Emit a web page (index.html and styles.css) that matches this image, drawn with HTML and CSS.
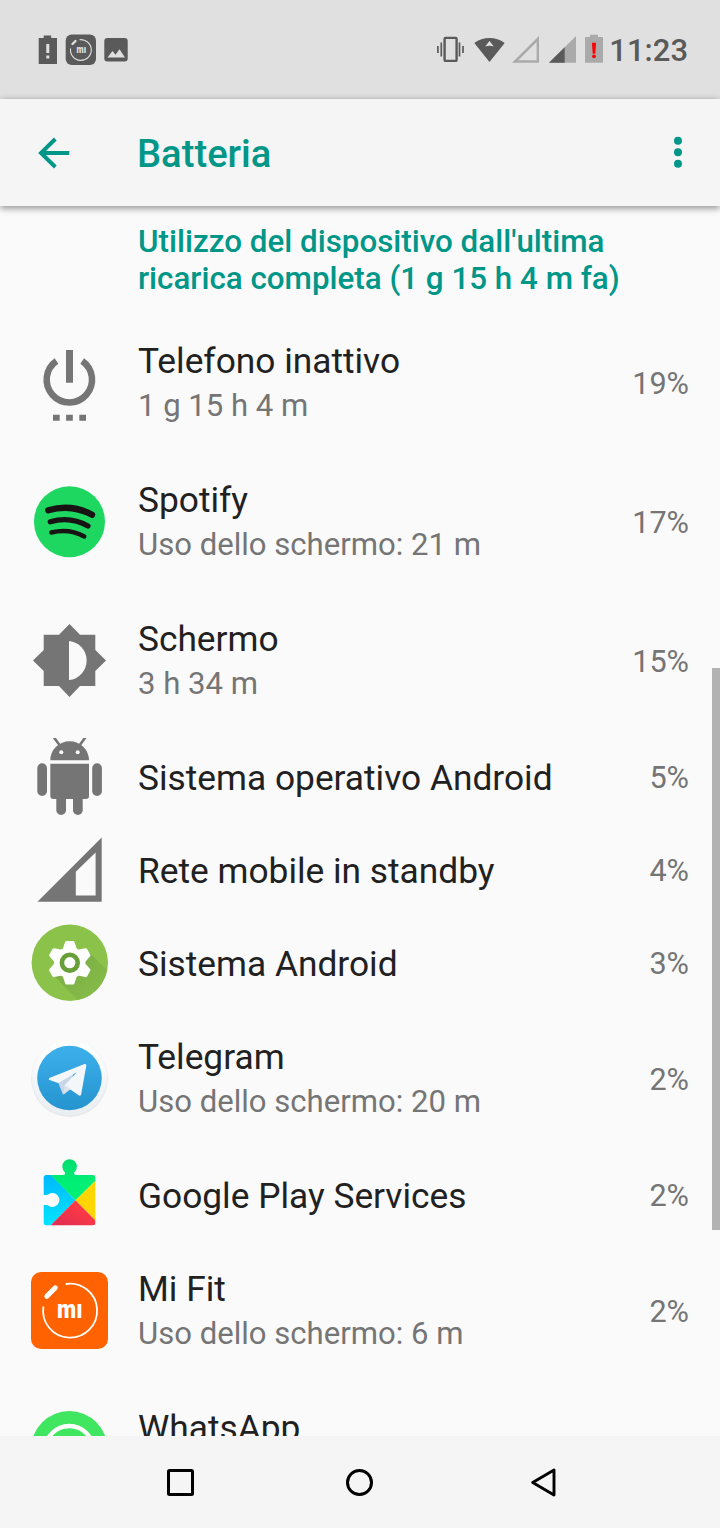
FILE: index.html
```
<!DOCTYPE html>
<html lang="it">
<head>
    <meta charset="UTF-8">
    <meta name="viewport" content="width=device-width, initial-scale=1.0">
    <title>Batteria</title>
    <link rel="stylesheet" href="styles.css">
</head>
<body>

<div class="status-bar">
    <div class="notifications">
        <svg width="20" height="32" viewBox="0 0 20 32">
            <path fill="#5a5a5a" d="M0.700 4h5V1.500h7.500V4H19v26H0.700z"/>
            <path fill="#e0e0e0" d="M8.300 10h3v9h-3zM8.300 21.500h3v3h-3z"/>
        </svg>
        <svg width="32" height="32" viewBox="0 0 32 32">
            <rect x="0.700" y="0.500" width="30.300" height="30.500" rx="6" fill="#5a5a5a"/>
            <path d="M14.500 5.700A10.400 10.400 0 1 1 5.600 14.500" fill="none" stroke="#e0e0e0" stroke-width="1.100"/>
            <path d="M7.500 10l3-3" stroke="#e0e0e0" stroke-width="2.400" stroke-linecap="round"/>
            <text class="mi" x="11.500" y="18.700" font-size="11" textLength="9.500" lengthAdjust="spacingAndGlyphs" fill="#e0e0e0">mı</text>
        </svg>
        <svg width="24" height="32" viewBox="0 0 24 32">
            <rect x="0.300" y="4" width="23.400" height="23.600" rx="3" fill="#5a5a5a"/>
            <path fill="#e0e0e0" d="M3.500 23.500l5-6.500 3 3.700 4-5.500 5.500 8.300z"/>
        </svg>
    </div>
    <div class="indicators">
        <svg width="29" height="32" viewBox="0 0 29 32">
            <rect x="8.600" y="3.900" width="12" height="23" rx="1" fill="none" stroke="#5a5a5a" stroke-width="2.400"/>
            <path d="M5.300 8.500v14M1.900 12v7M23.500 8.500v14M27 12v7" stroke="#5a5a5a" stroke-width="1.700"/>
        </svg>
        <svg class="wifi" width="31" height="32" viewBox="0 0 31 32">
            <path fill="#5a5a5a" d="M0.300 9C9 2.300 22 2.300 30.700 9L15.500 28z"/>
            <path fill="#e0e0e0" d="M15.500 7l4.300 5.600c-2.300-1.300-6.300-1.300-8.600 0z"/>
        </svg>
        <svg class="sim" width="27" height="32" viewBox="0 0 27 32">
            <path fill="#aaa" fill-rule="evenodd" d="M0 28.700L27 2v26.700zM6.300 26.300h18.300V8z"/>
        </svg>
        <svg class="sim-data" width="27" height="32" viewBox="0 0 27 32">
            <path fill="#aaa" d="M0 28.700L27 2v26.700z"/>
            <path fill="#5a5a5a" d="M0 28.700L15.700 13.200v15.500z"/>
        </svg>
        <svg width="20" height="32" viewBox="0 0 20 32">
            <path fill="#aaa" d="M1 3h5V0.700h8V3h5v25.700H1z"/>
            <path fill="#f00" d="M8 8.700h4l-0.700 11H8.700z"/>
            <circle cx="10" cy="22.300" r="1.900" fill="#f00"/>
        </svg>
        <span class="clock">11:23</span>
    </div>
</div>

<div class="app-bar">
    <svg class="back" width="32" height="32" viewBox="0 0 32 32">
        <path d="M31.300 16H4M17.300 2L3 16l14.300 14" fill="none" stroke="#009688" stroke-width="3.900"/>
    </svg>
    <h1>Batteria</h1>
    <svg class="menu" width="10" height="34" viewBox="0 0 10 34" fill="#009688">
        <circle cx="5" cy="4.800" r="4"/>
        <circle cx="5" cy="16.300" r="4"/>
        <circle cx="5" cy="27.800" r="4"/>
    </svg>
</div>

<div class="content">
    <h2>Utilizzo del dispositivo dall'ultima<br>ricarica completa (1 g 15 h 4 m fa)</h2>

    <!-- Telefono inattivo -->
    <div class="row double">
        <svg class="icon" viewBox="0 -1 77 77">
            <path fill="#757575" d="M35 5h7v32.700h-7zM22 69.700h6.700v6H22zM35.100 69.700h6.700v6h-6.700zM48.300 69.700H55v6h-6.700z"/>
            <path d="M25.500 16A22.700 22.700 0 1 0 51.200 16" fill="none" stroke="#757575" stroke-width="6.500"/>
        </svg>
        <div class="text">
            <div class="name">Telefono inattivo</div>
            <div class="summary">1 g 15 h 4 m</div>
        </div>
        <div class="percent">19%</div>
    </div>

    <!-- Spotify -->
    <div class="row double">
        <svg class="icon" viewBox="0 -1 77 77">
            <circle cx="38.500" cy="37.700" r="35.500" fill="#1ed760"/>
            <g fill="none" stroke="#191414" stroke-linecap="round">
                <path d="M17.300 26.300Q40 19.500 61 30.700" stroke-width="6.400"/>
                <path d="M19.300 37.700Q39.500 32 57 42" stroke-width="5.300"/>
                <path d="M20.300 48.500Q38 44 53.300 52.500" stroke-width="4.400"/>
            </g>
        </svg>
        <div class="text">
            <div class="name">Spotify</div>
            <div class="summary">Uso dello schermo: 21 m</div>
        </div>
        <div class="percent">17%</div>
    </div>

    <!-- Schermo -->
    <div class="row double">
        <svg class="icon" viewBox="0 -1 77 77">
            <path fill="#757575" d="M12.700 11.700H28L38.500 1 49 11.700h15.300V27L75 37.500 64.300 48v15H49L38.500 74 28 63H12.700V48L2 37.500 12.700 27z"/>
            <path fill="#fafafa" d="M38 18a19.600 19.600 0 0 1 0 39z"/>
        </svg>
        <div class="text">
            <div class="name">Schermo</div>
            <div class="summary">3 h 34 m</div>
        </div>
        <div class="percent">15%</div>
    </div>

    <!-- Sistema operativo Android -->
    <div class="row">
        <svg class="icon" viewBox="0 -1 77 77">
            <g fill="#757575">
                <path d="M19.300 21.200a19.350 19 0 0 1 38.700 0z"/>
                <path d="M19.300 24.700H58V57a3 3 0 0 1-3 3H22.300a3 3 0 0 1-3-3z"/>
                <rect x="6.300" y="24.300" width="9.700" height="32.700" rx="4.850"/>
                <rect x="61.200" y="24.300" width="9.700" height="32.700" rx="4.850"/>
                <rect x="25.300" y="50" width="9.700" height="26" rx="4.850"/>
                <rect x="42" y="50" width="9.700" height="26" rx="4.850"/>
            </g>
            <path d="M23 -1.500l5.500 7.500M54.300 -1.500L48.800 6" stroke="#757575" stroke-width="2.600"/>
            <circle cx="30.300" cy="13.300" r="2" fill="#fafafa"/>
            <circle cx="46.700" cy="13.300" r="2" fill="#fafafa"/>
        </svg>
        <div class="text">
            <div class="name">Sistema operativo Android</div>
        </div>
        <div class="percent">5%</div>
    </div>

    <!-- Rete mobile -->
    <div class="row">
        <svg class="icon" viewBox="0 -1 77 77">
            <path fill="#757575" fill-rule="evenodd" d="M6.500 69.700L70.700 5.500v64.200zM44.800 39.800v23.600h19.800V20.500z"/>
        </svg>
        <div class="text">
            <div class="name">Rete mobile in standby</div>
        </div>
        <div class="percent">4%</div>
    </div>

    <!-- Sistema Android -->
    <div class="row">
        <svg class="icon" viewBox="0 -1 77 77">
            <defs>
                <clipPath id="disc"><circle cx="38.800" cy="37.700" r="38.200"/></clipPath>
                <linearGradient id="shade" x1="0" y1="0" x2="1" y2="1">
                    <stop offset="0.200" stop-color="#7cae45"/>
                    <stop offset="0.800" stop-color="#88c049"/>
                </linearGradient>
            </defs>
            <circle cx="38.800" cy="37.700" r="38.200" fill="#8bc34a"/>
            <path clip-path="url(#disc)" fill="url(#shade)" d="M22 50l35-20 2-2 30 30v30H60z"/>
            <g fill="#fff">
                <circle cx="38.800" cy="37.700" r="15.600"/>
                <path id="tooth" d="M31.300 25.400l2.800-8.300q.3-1.200 1.400-1.200h6.600q1.100 0 1.400 1.200l2.800 8.300z"/>
                <use href="#tooth" transform="rotate(60 38.800 37.700)"/>
                <use href="#tooth" transform="rotate(120 38.800 37.700)"/>
                <use href="#tooth" transform="rotate(180 38.800 37.700)"/>
                <use href="#tooth" transform="rotate(240 38.800 37.700)"/>
                <use href="#tooth" transform="rotate(300 38.800 37.700)"/>
            </g>
            <circle cx="38.800" cy="37.700" r="7.900" fill="none" stroke="#689f38" stroke-width="4.600"/>
        </svg>
        <div class="text">
            <div class="name">Sistema Android</div>
        </div>
        <div class="percent">3%</div>
    </div>

    <!-- Telegram -->
    <div class="row double">
        <svg class="icon" viewBox="0 -1 77 77">
            <defs>
                <linearGradient id="sky" x1="0" y1="0" x2="0" y2="1">
                    <stop offset="0" stop-color="#3db0ec"/>
                    <stop offset="1" stop-color="#2594cf"/>
                </linearGradient>
                <linearGradient id="rim" x1="0" y1="0" x2="0" y2="1">
                    <stop offset="0" stop-color="#fff"/>
                    <stop offset="1" stop-color="#e9eef2"/>
                </linearGradient>
            </defs>
            <circle cx="38.500" cy="37.700" r="38.300" fill="#e6e8ea"/>
            <circle cx="38.500" cy="36.900" r="37.700" fill="url(#rim)"/>
            <circle cx="38.500" cy="37" r="32.300" fill="url(#sky)"/>
            <path fill="#c8d6e5" d="M27.500 42.500l4 10q.7 1.500 2 .5l6.500-5 2-15z"/>
            <path fill="#f4f7fa" d="M18.300 36.900L53.500 23q2-.5 1.800 1.500L50.200 53.300q-.5 2-2.500 1L33.500 44.500 46 31 27.800 42.300l-9.300-3.200q-1.500-1-.2-2.200z"/>
            <path fill="#dbe4ee" d="M33.500 44l-1 8.500 6.500-5z"/>
        </svg>
        <div class="text">
            <div class="name">Telegram</div>
            <div class="summary">Uso dello schermo: 20 m</div>
        </div>
        <div class="percent">2%</div>
    </div>

    <!-- Google Play Services -->
    <div class="row">
        <svg class="icon" viewBox="0 -1 77 77">
            <defs>
                <clipPath id="piece"><rect x="12.700" y="18" width="51.600" height="50.300" rx="2.500"/></clipPath>
                <linearGradient id="blue" x1="0" y1="0" x2="0" y2="1">
                    <stop offset="0" stop-color="#00b8ff"/>
                    <stop offset="1" stop-color="#00e5ff"/>
                </linearGradient>
                <linearGradient id="red" x1="1" y1="0" x2="0" y2="1">
                    <stop offset="0.300" stop-color="#ff3a44"/>
                    <stop offset="1" stop-color="#d92b55"/>
                </linearGradient>
                <linearGradient id="green" x1="0" y1="0" x2="0" y2="1">
                    <stop offset="0" stop-color="#00dc6c"/>
                    <stop offset="0.600" stop-color="#00f076"/>
                </linearGradient>
            </defs>
            <g clip-path="url(#piece)">
                <path fill="url(#blue)" d="M12 17h7.500L44.300 43.200 19 69h-7z"/>
                <path fill="#ffd500" d="M44.300 43.200L65 23v41z"/>
                <path fill="url(#red)" d="M44.300 43.200L19 69h46v-5z"/>
            </g>
            <path fill="url(#green)" d="M19.500 18H32q2.500 0 2-2.500-2.700-2.500-2.700-6a7.300 7.300 0 0 1 14.600 0q0 3.500-2.700 6-.5 2.500 2 2.500H62q2.300 0 2.300 2.500V23.700L44.300 43.200z"/>
            <path fill="#fafafa" d="M12 38h3.500q1.200 0 2-.8a7 7 0 1 1 0 11.600q-.8-.8-2-.8H12z"/>
        </svg>
        <div class="text">
            <div class="name">Google Play Services</div>
        </div>
        <div class="percent">2%</div>
    </div>

    <!-- Mi Fit -->
    <div class="row double">
        <svg class="icon" viewBox="0 -1 77 77">
            <rect y="-1" width="77" height="77" rx="10" fill="#ff6200"/>
            <path d="M34.700 11A27 27 0 1 1 12.400 33.500" fill="none" stroke="#fff" stroke-width="1.800"/>
            <path d="M15.800 23.300l8.500-8.500" stroke="#fff" stroke-width="5" stroke-linecap="round"/>
            <text class="mi" x="26" y="45" font-size="26" textLength="25.500" lengthAdjust="spacingAndGlyphs" fill="#fff">mı</text>
        </svg>
        <div class="text">
            <div class="name">Mi Fit</div>
            <div class="summary">Uso dello schermo: 6 m</div>
        </div>
        <div class="percent">2%</div>
    </div>

    <!-- WhatsApp -->
    <div class="row double">
        <svg class="icon" viewBox="0 -1 77 77">
            <circle cx="38.300" cy="37.300" r="38.300" fill="#40e65f"/>
            <circle cx="38.300" cy="38" r="24" fill="none" stroke="#fff" stroke-width="4.300"/>
        </svg>
        <div class="text">
            <div class="name">WhatsApp</div>
            <div class="summary"></div>
        </div>
    </div>

    <div class="scrollbar"></div>
</div>

<div class="nav-bar">
    <svg width="30" height="32" viewBox="0 0 30 32">
        <rect x="2.500" y="4.500" width="24" height="24" rx="1" fill="none" stroke="#000" stroke-width="3"/>
    </svg>
    <svg width="30" height="32" viewBox="0 0 30 32">
        <circle cx="14.500" cy="16.500" r="12" fill="none" stroke="#000" stroke-width="3"/>
    </svg>
    <svg width="30" height="32" viewBox="0 0 30 32">
        <path d="M30 4v25L8.700 16.500z" fill="none" stroke="#000" stroke-width="2.900" stroke-linejoin="round"/>
    </svg>
</div>

</body>
</html>
```
FILE: styles.css
```
body {
    margin: 0;
    width: 720px;
    height: 1528px;
    display: flex;
    flex-direction: column;
    overflow: hidden;
    background-color: #fafafa;
    font-family: Roboto, sans-serif;
}
svg {
    display: block;
    flex-shrink: 0;
    overflow: visible;
}
h1, h2 {
    margin: 0;
    font-weight: 500;
    color: #009688;
}

/* Status bar */
.status-bar {
    display: flex;
    justify-content: space-between;
    align-items: center;
    box-sizing: border-box;
    height: 99px;
    flex-shrink: 0;
    padding: 1px 32px 0 38px;
    background-color: #e0e0e0;
}
.notifications, .indicators {
    display: flex;
    align-items: center;
}
.notifications {
    gap: 7px;
}
.wifi {
    margin-left: 9px;
}
.sim {
    margin: 0 10px 0 7px;
}
.sim-data {
    margin-right: 8px;
}
.clock {
    margin-left: 5px;
    font-size: 31px;
    font-weight: 500;
    color: #5a5a5a;
}
.mi {
    font-family: Roboto, sans-serif;
    font-weight: 900;
}

/* Title bar */
.app-bar {
    display: flex;
    align-items: center;
    box-sizing: border-box;
    height: 107px;
    flex-shrink: 0;
    padding: 0 37px 0 38px;
    background-color: #f5f5f5;
    box-shadow: 0 2px 7px rgba(0, 0, 0, 0.45);
    z-index: 1;
}
.app-bar h1 {
    flex: 1;
    margin-left: 67px;
    padding-top: 3px;
    font-size: 38.2px;
}

/* Usage list */
.content {
    position: relative;
    flex: 1;
    min-height: 0;
    overflow: hidden;
}
.content h2 {
    box-sizing: border-box;
    height: 107px;
    padding: 17px 0 0 138px;
    font-size: 31.35px;
    line-height: 37px;
}
.row {
    display: flex;
    align-items: center;
    height: 93px;
    padding: 0 31px;
}
.double {
    height: 139px;
}
.icon {
    width: 77px;
    height: 77px;
    overflow: hidden;
}
.text {
    flex: 1;
    margin-left: 30px;
    padding-top: 2px;
}
.double .text {
    padding-top: 0;
}
.name {
    font-size: 35.3px;
    line-height: 46px;
    color: #212121;
}
.double .name {
    line-height: 44px;
}
.summary {
    height: 42px;
    padding-top: 1px;
    font-size: 31.1px;
    line-height: 44px;
    color: #757575;
}
.percent {
    padding-top: 2px;
    font-size: 30.6px;
    color: #757575;
}
.scrollbar {
    position: absolute;
    top: 462px;
    right: 0;
    width: 8px;
    height: 562px;
    background-color: #b2b2b2;
}

/* Navigation bar */
.nav-bar {
    display: flex;
    justify-content: center;
    align-items: center;
    gap: 149px;
    height: 92px;
    flex-shrink: 0;
    background-color: #f5f5f5;
}
```
